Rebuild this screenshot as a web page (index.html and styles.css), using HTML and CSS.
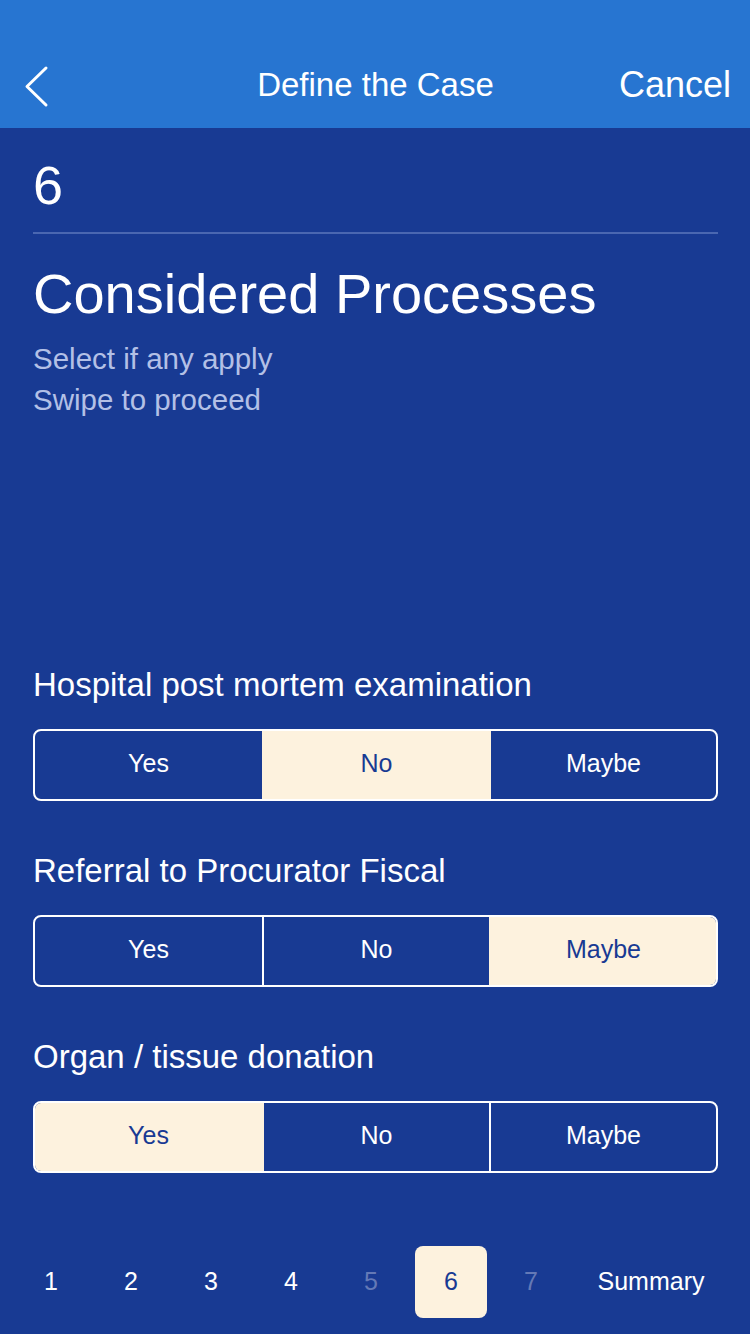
FILE: index.html
```html
<!DOCTYPE html>
<html lang="en">
<head>
<meta charset="utf-8">
<title>Define the Case</title>
<link rel="stylesheet" href="styles.css">
</head>
<body>
<div class="screen">
  <header class="navbar">
    <div class="nav-back">
      <svg width="30" height="44" viewBox="0 0 30 44" aria-hidden="true">
        <polyline points="26,4 7,22.5 26,41" fill="none" stroke="#ffffff" stroke-width="3" stroke-linecap="round" stroke-linejoin="round"/>
      </svg>
    </div>
    <div class="nav-title">Define the Case</div>
    <div class="nav-cancel">Cancel</div>
  </header>

  <main class="content">
    <div class="step-num">6</div>
    <div class="divider"></div>
    <h1 class="title">Considered Processes</h1>
    <div class="subtitle">
      <div>Select if any apply</div>
      <div>Swipe to proceed</div>
    </div>

    <div class="questions">
      <div class="question">
        <div class="q-label">Hospital post mortem examination</div>
        <div class="segmented">
          <div class="seg">Yes</div>
          <div class="seg on">No</div>
          <div class="seg">Maybe</div>
        </div>
      </div>
      <div class="question">
        <div class="q-label">Referral to Procurator Fiscal</div>
        <div class="segmented">
          <div class="seg">Yes</div>
          <div class="seg">No</div>
          <div class="seg on">Maybe</div>
        </div>
      </div>
      <div class="question">
        <div class="q-label">Organ / tissue donation</div>
        <div class="segmented">
          <div class="seg on">Yes</div>
          <div class="seg">No</div>
          <div class="seg">Maybe</div>
        </div>
      </div>
    </div>
  </main>

  <nav class="pager">
    <div class="page">1</div>
    <div class="page">2</div>
    <div class="page">3</div>
    <div class="page">4</div>
    <div class="page dim">5</div>
    <div class="page current">6</div>
    <div class="page dim">7</div>
    <div class="page summary">Summary</div>
  </nav>
</div>
</body>
</html>
```

FILE: styles.css
```css
* {
  box-sizing: border-box;
}

html, body {
  margin: 0;
  padding: 0;
  background: #183a93;
}

body {
  font-family: "Liberation Sans", Arial, Helvetica, sans-serif;
  color: #ffffff;
}

.screen {
  width: 750px;
  height: 1334px;
  overflow: hidden;
  background: #183a93;
}

/* Navigation bar */
.navbar {
  height: 128px;
  background: #2775d1;
  padding: 42px 19px 0 20px;
  display: grid;
  grid-template-columns: 1fr auto 1fr;
  align-items: center;
}

.nav-back {
  height: 86px;
  display: flex;
  align-items: center;
  padding-top: 1px;
}

.nav-back svg {
  display: block;
}

.nav-title {
  font-size: 33px;
  line-height: 86px;
  white-space: nowrap;
}

.nav-cancel {
  font-size: 36px;
  line-height: 86px;
  text-align: right;
  white-space: nowrap;
}

/* Content */
.content {
  padding: 28px 32px 0 33px;
}

.step-num {
  font-size: 54px;
  line-height: 58px;
}

.divider {
  margin-top: 18px;
  height: 2px;
  background: #4a67b1;
}

.title {
  margin: 28px 0 0;
  font-size: 56px;
  line-height: 64px;
  font-weight: normal;
  white-space: nowrap;
}

.subtitle {
  margin-top: 12px;
  font-size: 29.5px;
  line-height: 41px;
  color: #b3c0e6;
}

.questions {
  margin-top: 245px;
  display: flex;
  flex-direction: column;
  gap: 50px;
}

.q-label {
  font-size: 33px;
  line-height: 40px;
  margin-bottom: 24px;
  white-space: nowrap;
}

.segmented {
  height: 72px;
  border: 2px solid #ffffff;
  border-radius: 8px;
  overflow: hidden;
  display: grid;
  grid-template-columns: 1fr 1fr 1fr;
}

.seg {
  display: flex;
  align-items: center;
  justify-content: center;
  font-size: 25px;
  color: #ffffff;
  padding-bottom: 3px;
}

.seg + .seg {
  border-left: 2px solid #ffffff;
}

.seg.on {
  background: #fdf2de;
  color: #183a93;
}

.seg + .seg.on,
.seg.on + .seg {
  border-left-color: #fdf2de;
}

/* Pager */
.pager {
  margin-top: 73px;
  padding: 0 15px;
  display: flex;
  gap: 8px;
}

.page {
  width: 72px;
  height: 72px;
  display: flex;
  align-items: center;
  justify-content: center;
  font-size: 25px;
  color: #ffffff;
  border-radius: 8px;
  padding-bottom: 2px;
}

.page.dim {
  color: #6479b6;
}

.page.current {
  background: #fdf2de;
  color: #183a93;
}

.page.summary {
  width: 152px;
}
```
